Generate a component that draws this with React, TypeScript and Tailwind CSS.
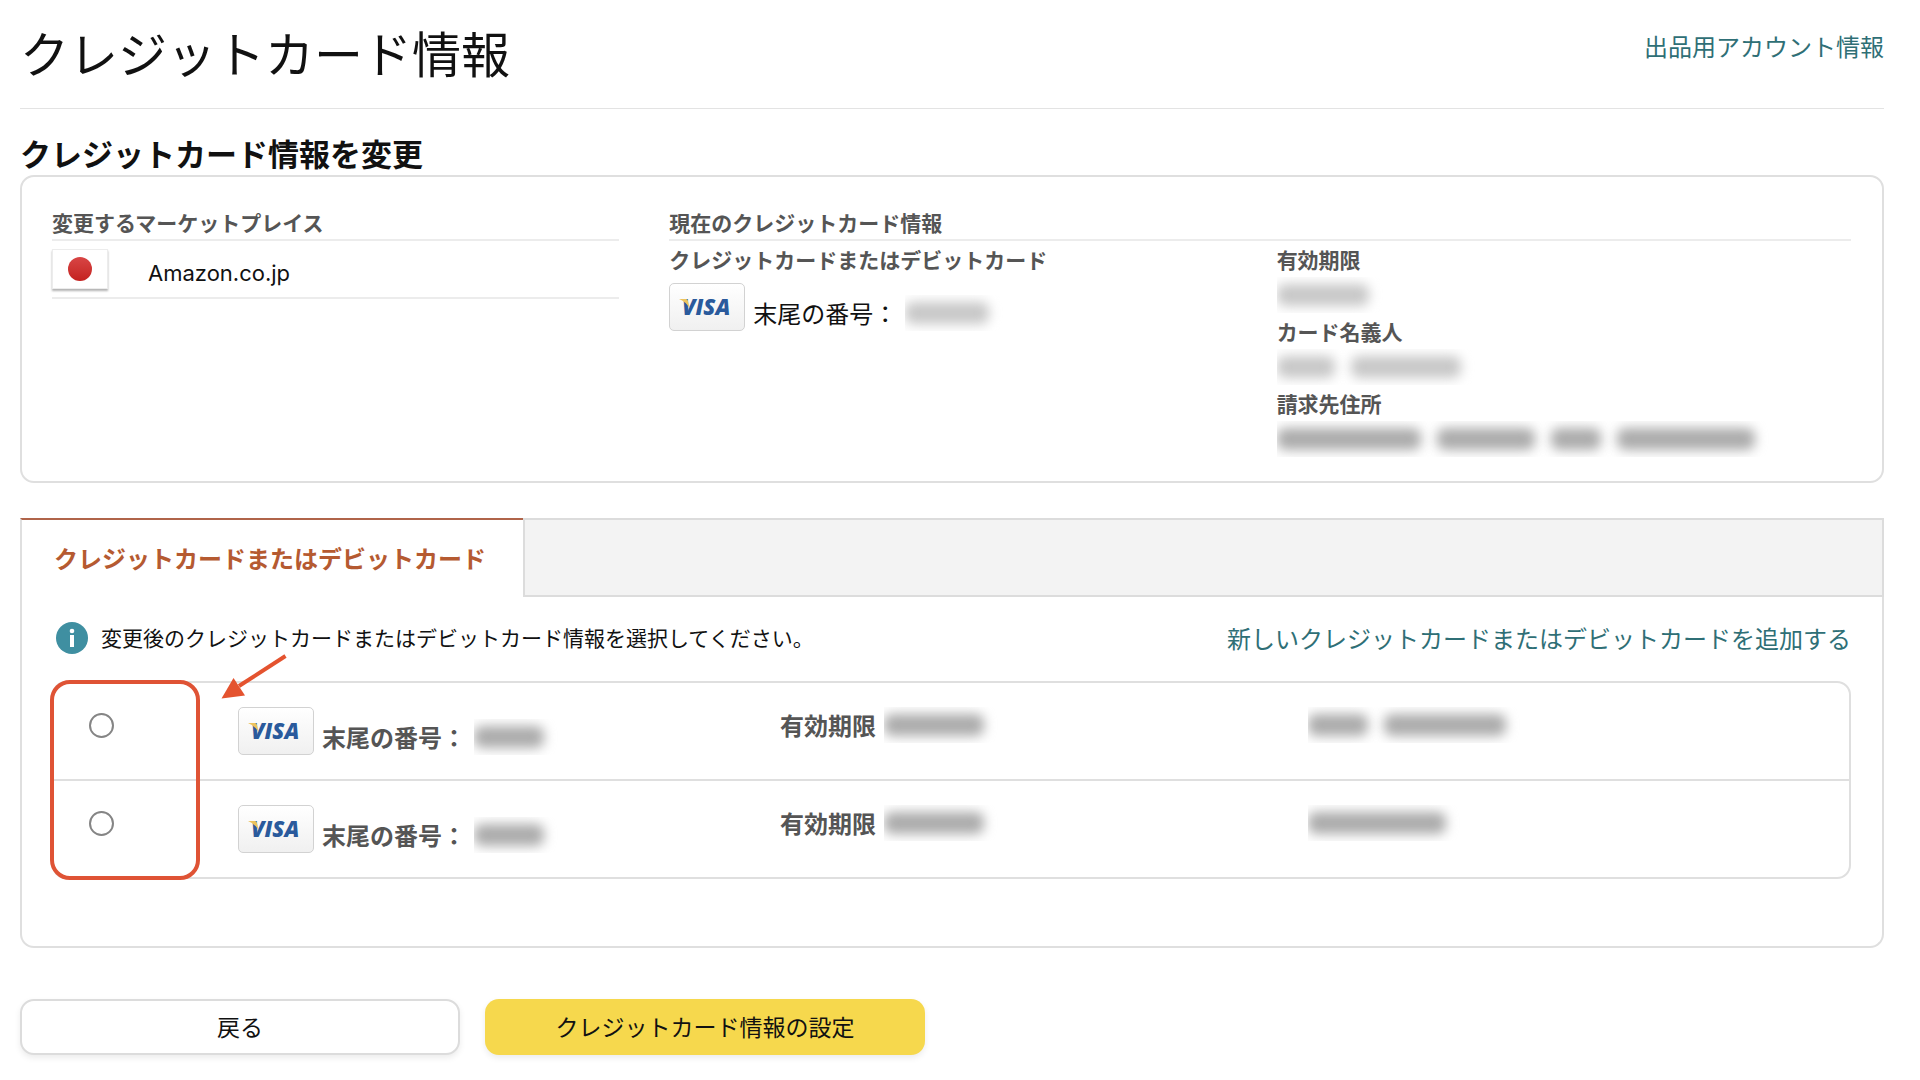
import { useState } from 'react';

type Card = {
  id: string;
  numberWidth: string;
  expiryWidth: string;
  holder: string[];
};

const cards: Card[] = [
  { id: 'card-1', numberWidth: 'w-[70px]', expiryWidth: 'w-[100px]', holder: ['w-[60px]', 'w-[122px]'] },
  { id: 'card-2', numberWidth: 'w-[70px]', expiryWidth: 'w-[100px]', holder: ['w-[138px]'] },
];

// Private values are never shown, only a blurred bar for each word
function Masked({ words, tone = 'bg-[#acacac]' }: { words: string[]; tone?: string }) {
  return (
    <span className="inline-flex h-9 items-center gap-4 overflow-hidden pr-4" aria-hidden="true">
      {words.map((width, index) => (
        <span key={index} className={`h-[22px] rounded-lg blur-[6px] ${width} ${tone}`}></span>
      ))}
    </span>
  );
}

function VisaBadge() {
  return (
    <span className="inline-flex h-12 w-[76px] shrink-0 items-center justify-center rounded-[5px] border border-[#d2d2d2] bg-gradient-to-b from-white to-[#f0f0f0]">
      <svg width="60" height="40" viewBox="0 0 60 40" role="img" aria-label="VISA">
        <text
          x="5"
          y="28"
          fontFamily="'Open Sans', sans-serif"
          fontSize="22"
          fontWeight="800"
          fontStyle="italic"
          fill="#2a5a9c"
        >
          VISA
        </text>
        <path d="M2 12 H9 Q10.500 12.200 11 14 L12.500 21 Q8.500 14.500 2 12 Z" fill="#edc35e" />
      </svg>
    </span>
  );
}

function JapanFlag() {
  return (
    <span className="flex h-10 w-14 shrink-0 items-center justify-center border border-[#ececec] bg-white shadow-[0_2px_2px_rgba(0,0,0,0.3)]">
      <span className="h-6 w-6 rounded-full bg-gradient-to-b from-[#d84545] to-[#c4201e]"></span>
    </span>
  );
}

function App() {
  const [selected, setSelected] = useState('');

  return (
    <div className="min-h-screen bg-white pl-5 pr-9 pb-6 font-['Noto_Sans_CJK_JP',sans-serif] text-[#111]">
      {/* Page header */}
      <header className="flex items-start justify-between border-b border-[#e3e3e3] pt-[22px] pb-[26px]">
        <h1 className="text-[49px] leading-[60px]">クレジットカード情報</h1>
        <a href="#account" className="text-[24px] leading-12 text-[#2f6f76]">
          出品用アカウント情報
        </a>
      </header>

      {/* Current card */}
      <h2 className="mt-[26px] pb-1 text-[31px] font-bold leading-9">クレジットカード情報を変更</h2>
      <section className="grid grid-cols-[12fr_25fr] gap-x-[50px] rounded-[14px] border-2 border-[#dfdfdf] pl-[30px] pr-[31px] pt-8 pb-5 text-[21px]">
        <div>
          <h3 className="border-b-2 border-[#ececec] pb-1 font-bold leading-[26px] text-[#555]">
            変更するマーケットプレイス
          </h3>
          <div className="flex items-end gap-10 border-b-2 border-[#ececec] py-2">
            <JapanFlag />
            <span className="font-['Inter',sans-serif] text-[22px] leading-8">Amazon.co.jp</span>
          </div>
        </div>

        <div>
          <h3 className="border-b-2 border-[#ececec] pb-1 font-bold leading-[26px] text-[#555]">
            現在のクレジットカード情報
          </h3>
          <div className="grid grid-cols-[607fr_574fr] pt-1">
            <div>
              <h4 className="font-bold leading-7 text-[#555]">クレジットカードまたはデビットカード</h4>
              <div className="mt-[10px] flex items-end gap-2">
                <VisaBadge />
                <span className="text-[24px] leading-9">末尾の番号：</span>
                <Masked words={['w-[84px]']} tone="bg-[#c8c8c8]" />
              </div>
            </div>
            <dl>
              <dt className="font-bold leading-7 text-[#555]">有効期限</dt>
              <dd className="flex h-11 items-center">
                <Masked words={['w-[92px]']} tone="bg-[#c8c8c8]" />
              </dd>
              <dt className="font-bold leading-7 text-[#555]">カード名義人</dt>
              <dd className="flex h-11 items-center">
                <Masked words={['w-[58px]', 'w-[110px]']} tone="bg-[#c8c8c8]" />
              </dd>
              <dt className="font-bold leading-7 text-[#555]">請求先住所</dt>
              <dd className="flex h-11 items-center">
                <Masked words={['w-[144px]', 'w-[98px]', 'w-[50px]', 'w-[138px]']} />
              </dd>
            </dl>
          </div>
        </div>
      </section>

      {/* Card list */}
      <section className="mt-[35px]">
        <div role="tablist" className="flex">
          <button
            type="button"
            role="tab"
            aria-selected="true"
            className="border-t-2 border-l-2 border-t-[#b0644a] border-l-[#dfdfdf] pt-5 pb-[21px] pl-8 pr-[37px] text-[24px] font-bold leading-9 text-[#b55a31]"
          >
            クレジットカードまたはデビットカード
          </button>
          <div className="flex-1 border-2 border-[#dcdcdc] bg-[#f3f3f3]"></div>
        </div>

        <div role="tabpanel" className="rounded-b-[14px] border-x-2 border-b-2 border-[#dfdfdf] pl-[30px] pr-[31px] pt-5 pb-[67px]">
          <div className="flex h-[42px] items-center justify-between">
            <p className="flex items-center gap-[13px] pl-1 text-[21px]">
              <svg width="32" height="32" viewBox="0 0 32 32" aria-hidden="true">
                <circle cx="16" cy="16" r="16" fill="#3f8fa1" />
                <circle cx="16" cy="9" r="2.3" fill="#fff" />
                <rect x="14" y="13" width="4" height="12" fill="#fff" />
              </svg>
              変更後のクレジットカードまたはデビットカード情報を選択してください。
            </p>
            <a href="#add" className="text-[24px] text-[#2f6f76]">
              新しいクレジットカードまたはデビットカードを追加する
            </a>
          </div>

          <div className="relative mt-[22px]">
            <ul className="divide-y-2 divide-[#dfdfdf] rounded-[14px] border-2 border-[#dfdfdf] text-[24px] font-bold leading-9 text-[#555]">
              {cards.map((card) => (
                <li key={card.id}>
                  <label
                    htmlFor={card.id}
                    className="grid min-h-24 cursor-pointer grid-cols-[184fr_542fr_528fr_541fr] items-start pt-6"
                  >
                    <span className="flex h-9 items-center pl-[35px]">
                      <input
                        type="radio"
                        id={card.id}
                        name="card"
                        value={card.id}
                        checked={selected === card.id}
                        onChange={() => setSelected(card.id)}
                        className="h-[25px] w-[25px] appearance-none rounded-full border-2 border-[#858585] bg-white checked:border-8 checked:border-[#3f8fa1]"
                      />
                    </span>
                    <span className="flex items-end gap-2">
                      <VisaBadge />
                      <span>末尾の番号：</span>
                      <Masked words={[card.numberWidth]} />
                    </span>
                    <span className="flex items-center gap-2">
                      <span>有効期限</span>
                      <Masked words={[card.expiryWidth]} />
                    </span>
                    <Masked words={card.holder} />
                  </label>
                </li>
              ))}
            </ul>

            {/* Callout over the radio column */}
            <div className="pointer-events-none absolute -inset-y-px -left-[2px] w-[150px] rounded-[20px] border-4 border-[#df5335]"></div>
            <svg
              className="pointer-events-none absolute -top-7 left-[167px]"
              width="72"
              height="50"
              viewBox="0 0 72 50"
              aria-hidden="true"
            >
              <path d="M66.500 3 L20 33" stroke="#e4532f" strokeWidth="4" />
              <path d="M2.500 45.500 L14.500 25 L26 42.500 Z" fill="#e4532f" />
            </svg>
          </div>
        </div>
      </section>

      {/* Actions */}
      <div className="mt-[51px] flex gap-[25px] text-[23px]">
        <button
          type="button"
          className="h-14 w-[440px] rounded-[14px] border-2 border-[#dcdcdc] bg-white pb-0.5 shadow-[0_3px_6px_rgba(0,0,0,0.08)]"
        >
          戻る
        </button>
        <button
          type="button"
          className="h-14 w-[440px] rounded-[14px] bg-[#f6d84d] pb-0.5 shadow-[0_3px_6px_rgba(0,0,0,0.08)]"
        >
          クレジットカード情報の設定
        </button>
      </div>
    </div>
  );
}

export default App;
